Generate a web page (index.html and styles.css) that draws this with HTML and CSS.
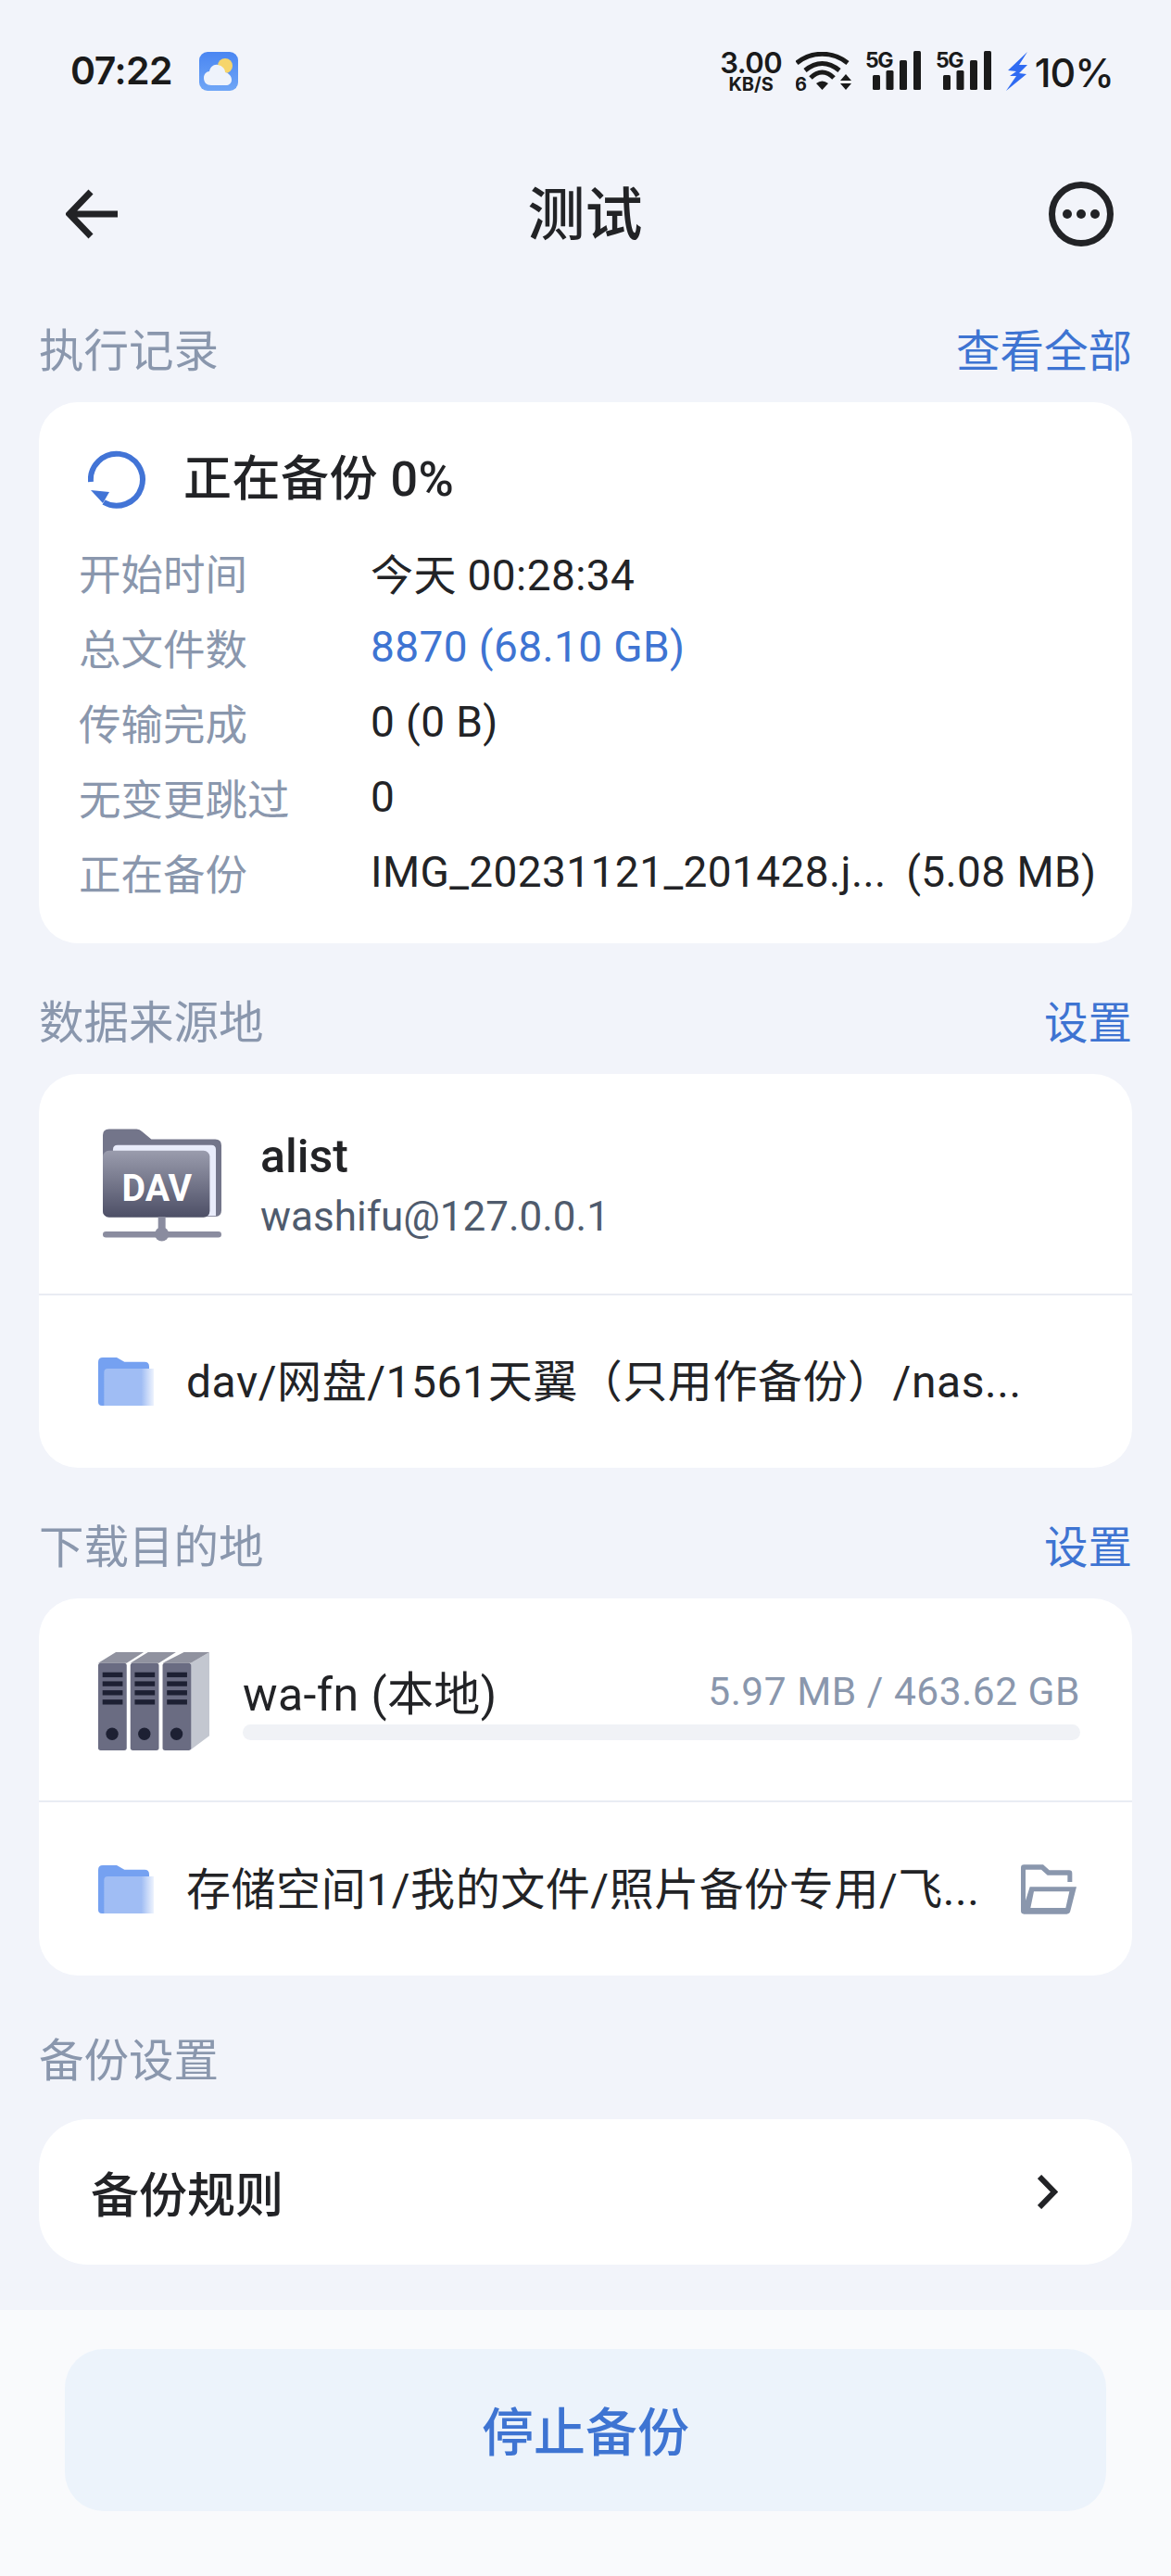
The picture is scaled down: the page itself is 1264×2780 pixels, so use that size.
FILE: index.html
```html
<!DOCTYPE html>
<html lang="zh-CN">
<head>
<meta charset="utf-8">
<title>测试</title>
<link rel="stylesheet" href="styles.css">
</head>
<body>
<div class="page">
  <div class="statusbar">
    <span class="time">07:22</span>
    <svg class="weather" viewBox="0 0 42 42"><defs><linearGradient id="wg" x1="0" y1="0" x2="0" y2="1"><stop offset="0" stop-color="#4a86f2"/><stop offset="1" stop-color="#6fa6f6"/></linearGradient></defs><rect width="42" height="42" rx="9" fill="url(#wg)"/><circle cx="28" cy="15" r="8" fill="#f6d56b"/><path d="M13 36c-5 0-8-3-8-8 0-4 3-7 6-7 1-5 5-8 9-7 5 1 8 4 8 8 4 1 7 4 7 8 0 4-3 6-6 6z" fill="#eef3fb"/></svg>
    <div class="status-right">
      <div class="speed"><span class="speed-num">3.00</span><span class="speed-unit">KB/S</span></div>
      <svg class="wifi" viewBox="0 0 60 48"><g fill="none" stroke="#1a1a1a" stroke-width="5"><path d="M1 12C17-1 40-1 56 12"/><path d="M10 20C22 10 35 10 47 20"/><path d="M16 28C24 20 33 20 41 28"/></g><path d="M22 34Q28.500 29 35 34L28.500 41z" fill="#1a1a1a"/><path d="M54 24l6 7H48zM48 34h12l-6 7z" fill="#1a1a1a"/><text x="-1" y="42" class="wifi-six">6</text></svg>
      <svg class="signal" viewBox="0 0 60 43"><text x="-1" y="19" class="sig-text">5G</text><rect x="7" y="27" width="8" height="16" rx="1.500"/><rect x="21.500" y="22" width="8" height="21" rx="1.500"/><rect x="36" y="11" width="8" height="32" rx="1.500"/><rect x="51" y="1" width="8" height="42" rx="1.500"/></svg>
      <svg class="signal signal-second" viewBox="0 0 60 43"><text x="-1" y="19" class="sig-text">5G</text><rect x="7" y="27" width="8" height="16" rx="1.500"/><rect x="21.500" y="22" width="8" height="21" rx="1.500"/><rect x="36" y="11" width="8" height="32" rx="1.500"/><rect x="51" y="1" width="8" height="42" rx="1.500"/></svg>
      <svg class="bolt" viewBox="0 0 24 42"><path d="M23 0 2 20l9 1-7 5h7L0 42 22 24l-8-1 9-9h-9z" fill="#2f6bf2"/></svg>
      <span class="battery">10%</span>
    </div>
  </div>

  <div class="navbar">
    <svg class="back" viewBox="0 0 56 54"><path d="M27 3 4 27l23 24M4 27h52" fill="none" stroke="#222326" stroke-width="7"/></svg>
    <span class="nav-title">测试</span>
    <svg class="more" viewBox="0 0 70 70"><circle cx="35" cy="35" r="31.500" fill="none" stroke="#222326" stroke-width="7"/><circle cx="20" cy="35" r="5" fill="#222326"/><circle cx="35" cy="35" r="5" fill="#222326"/><circle cx="50" cy="35" r="5" fill="#222326"/></svg>
  </div>

  <main class="content">
    <div class="section-head section-head-first"><span class="section-title">执行记录</span><span class="section-link">查看全部</span></div>
    <section class="card card-record">
      <div class="record-head">
        <svg class="spinner" viewBox="0 0 64 64"><path d="M3 34A28 28 0 1 1 17 56" fill="none" stroke="#4274d6" stroke-width="6"/><path d="M3 43l20 2-7 12z" fill="#4274d6"/></svg>
        <span class="record-title">正在备份 0%</span>
      </div>
      <div class="record-rows">
        <div class="record-row"><span class="record-label">开始时间</span><span class="record-value">今天 00:28:34</span></div>
        <div class="record-row"><span class="record-label">总文件数</span><span class="record-value record-value-link">8870 (68.10 GB)</span></div>
        <div class="record-row"><span class="record-label">传输完成</span><span class="record-value">0 (0 B)</span></div>
        <div class="record-row"><span class="record-label">无变更跳过</span><span class="record-value">0</span></div>
        <div class="record-row"><span class="record-label">正在备份</span><span class="record-value">IMG_20231121_201428.j...&nbsp;&thinsp;(5.08 MB)</span></div>
      </div>
    </section>

    <div class="section-head"><span class="section-title">数据来源地</span><span class="section-link">设置</span></div>
    <section class="card">
      <div class="source-row">
        <svg class="dav-icon" viewBox="212 145 386 365">
          <defs>
            <linearGradient id="dv" x1="0" y1="0" x2="0" y2="1"><stop offset="0" stop-color="#9a9cad"/><stop offset="1" stop-color="#4d4f66"/></linearGradient>
          </defs>
          <path d="M212 165q0-20 20-20h90q10 0 18 8l30 25h208q20 0 20 20v212q0 20-20 20H232q-20 0-20-20z" fill="#73758a"/>
          <path d="M245 212q0-15 15-15h305q15 0 15 15v216H245z" fill="#e9ecfb"/>
          <rect x="212" y="215" width="348" height="217" rx="20" fill="url(#dv)"/>
          <text x="274" y="380" class="dav-text" textLength="228" lengthAdjust="spacingAndGlyphs">DAV</text>
          <rect x="392" y="430" width="24" height="50" fill="#8a8c9f"/>
          <rect x="212" y="478" width="386" height="20" rx="10" fill="#8a8c9f"/>
          <circle cx="404" cy="487" r="23" fill="#8a8c9f"/>
        </svg>
        <div class="source-text">
          <div class="source-name">alist</div>
          <div class="source-addr">washifu@127.0.0.1</div>
        </div>
      </div>
      <div class="path-row path-row-source">
        <svg class="folder" viewBox="198 882 180 156">
          <defs><linearGradient id="fg" x1="0" y1="0" x2="1" y2="0"><stop offset="0.75" stop-color="#a0bdf4"/><stop offset="1" stop-color="#eef3fd"/></linearGradient></defs>
          <path d="M198 897q0-15 15-15h45l25 14h65q15 0 15 15v112q0 15-15 15H210q-12 0-12-12z" fill="#75a1f1"/>
          <path d="M217 930q0-12 12-12h149v120H217z" fill="url(#fg)"/>
        </svg>
        <span class="path-text">dav/网盘/1561天翼（只用作备份）/nas...</span>
      </div>
    </section>

    <div class="section-head"><span class="section-title">下载目的地</span><span class="section-link">设置</span></div>
    <section class="card">
      <div class="dest-row">
        <svg class="server-icon" viewBox="135 65 362 320">
          <path d="M437 103 497 68v270l-60 45z" fill="#c3c7d0"/>
          <path d="M138 103 195 68h90l-55 35zM242 103 299 68h90l-55 35zM346 103 415 68h82l-60 35z" fill="#90929f"/>
          <rect x="138" y="103" width="92" height="282" rx="8" fill="#6a6c82"/>
          <rect x="242" y="103" width="92" height="282" rx="8" fill="#6a6c82"/>
          <rect x="346" y="103" width="92" height="282" rx="8" fill="#6a6c82"/>
          <g fill="#1d2033">
            <rect x="152" y="133" width="65" height="16"/><rect x="152" y="162" width="65" height="16"/><rect x="152" y="191" width="65" height="16"/><rect x="152" y="221" width="65" height="16"/><circle cx="183" cy="332" r="20"/>
            <rect x="256" y="133" width="65" height="16"/><rect x="256" y="162" width="65" height="16"/><rect x="256" y="191" width="65" height="16"/><rect x="256" y="221" width="65" height="16"/><circle cx="287" cy="332" r="20"/>
            <rect x="360" y="133" width="65" height="16"/><rect x="360" y="162" width="65" height="16"/><rect x="360" y="191" width="65" height="16"/><rect x="360" y="221" width="65" height="16"/><circle cx="391" cy="332" r="20"/>
          </g>
        </svg>
        <div class="dest-info">
          <div class="dest-line"><span class="dest-name">wa-fn (本地)</span><span class="dest-size">5.97 MB / 463.62 GB</span></div>
          <div class="dest-bar"></div>
        </div>
      </div>
      <div class="path-row path-row-dest">
        <svg class="folder" viewBox="198 882 180 156">
          <path d="M198 897q0-15 15-15h45l25 14h65q15 0 15 15v112q0 15-15 15H210q-12 0-12-12z" fill="#75a1f1"/>
          <path d="M217 930q0-12 12-12h149v120H217z" fill="url(#fg)"/>
        </svg>
        <span class="path-text">存储空间1/我的文件/照片备份专用/飞...</span>
        <svg class="open-folder" viewBox="305 158 180 160"><path fill-rule="evenodd" d="M305 168q0-10 10-10h62l20 18h64q10 0 10 10v28h-15v-22h-65l-20-18h-51v100l14-44h151l-20 78q-2 10-12 10H315q-10 0-10-10zM347 245l-11 53h114l12-53z" fill="#8a97ad"/></svg>
      </div>
    </section>

    <div class="section-head section-head-plain"><span class="section-title">备份设置</span></div>
    <section class="card card-rule">
      <span class="rule-title">备份规则</span>
      <svg class="chevron" viewBox="0 0 22 37"><path d="M2 2l16 16.500L2 35" fill="none" stroke="#222326" stroke-width="6"/></svg>
    </section>
  </main>

  <footer class="bottom">
    <div class="stop-button">停止备份</div>
  </footer>
</div>
</body>
</html>
```
FILE: styles.css
```css
* { box-sizing: border-box; }
html, body { margin: 0; padding: 0; }
body {
  background: #f2f4fa;
  color: #222326;
  font-family: Roboto, "Noto Sans CJK SC", sans-serif;
}
.page { width: 1264px; height: 2780px; display: flex; flex-direction: column; }

.statusbar {
  height: 150px;
  padding: 0 62px 0 76px;
  display: flex;
  align-items: flex-start;
  font-family: Inter, sans-serif;
  color: #1a1a1a;
}
.time { margin-top: 51px; font-size: 41px; line-height: 50px; font-weight: 600; letter-spacing: -0.5px; }
.weather { width: 42px; height: 42px; margin: 56px 0 0 29px; }
.status-right { margin-left: auto; display: flex; align-items: flex-start; padding-top: 54px; }
.speed { width: 70px; display: flex; flex-direction: column; align-items: center; }
.speed-num { font-size: 31px; line-height: 28px; font-weight: 600; letter-spacing: -0.5px; }
.speed-unit { font-size: 20px; line-height: 18px; font-weight: 700; }
.wifi { width: 60px; height: 48px; margin: 2px 0 0 13px; }
.wifi-six { font: 700 20px Inter, sans-serif; fill: #1a1a1a; }
.signal { width: 60px; height: 43px; margin-left: 16px; fill: #1a1a1a; overflow: visible; }
.signal-second { margin-left: 16px; }
.sig-text { font: 700 23px Inter, sans-serif; letter-spacing: -1.5px; }
.bolt { width: 24px; height: 42px; margin: 2px 0 0 15px; }
.battery { margin: 0 0 0 7px; font-size: 43px; line-height: 48px; font-weight: 500; letter-spacing: -1px; }

.navbar {
  height: 162px;
  padding: 0 62px 0 71px;
  display: flex;
  align-items: center;
  justify-content: space-between;
}
.back { width: 56px; height: 54px; }
.more { width: 70px; height: 70px; }
.nav-title { font-size: 62px; line-height: 80px; font-weight: 500; padding: 3px 0 0 4px; }

.content { flex: 1; padding: 0 42px; }
.section-head {
  height: 110px;
  margin-top: 31px;
  padding-top: 2px;
  display: flex;
  align-items: center;
  justify-content: space-between;
}
.section-head-first { height: 122px; margin-top: 0; padding-top: 14px; }
.section-head-plain { height: 125px; margin-top: 30px; padding-top: 0; }
.section-title { font-size: 48.500px; line-height: 60px; color: #8a97ad; }
.section-link { font-size: 47.500px; line-height: 60px; color: #3e74d2; }

.card { background: #fff; border-radius: 42px; overflow: hidden; }

.card-record { padding: 44px 0 37px; }
.record-head { height: 80px; padding-left: 53px; display: flex; align-items: center; gap: 39px; }
.spinner { width: 64px; height: 64px; }
.record-title { font-size: 52px; line-height: 70px; font-weight: 500; letter-spacing: 0.5px; }
.record-rows { margin-top: 18px; }
.record-row { height: 81px; padding-left: 43px; display: flex; align-items: center; font-size: 46px; white-space: nowrap; }
.record-label { width: 315px; color: #8a97ad; font-size: 45.500px; }
.record-value { letter-spacing: 0.4px; }
.record-value-link { color: #3e74d2; }

.source-row { height: 239px; display: flex; align-items: flex-start; padding: 59px 0 0 69px; border-bottom: 2px solid #e9ecf3; }
.dav-icon { width: 128px; height: 122px; }
.source-text { margin: -6px 0 0 42px; }
.source-name { font-size: 50px; line-height: 64px; font-weight: 500; margin-top: 4px; }
.source-addr { font-size: 44px; line-height: 66px; color: #4f5b6d; }

.path-row { display: flex; align-items: center; padding-left: 64px; }
.path-row-source { height: 186px; }
.path-row-dest { height: 187px; }
.folder { width: 60px; height: 52px; }
.path-text { margin: 2px 0 0 35px; font-size: 48px; line-height: 60px; letter-spacing: 0.55px; white-space: nowrap; }
.open-folder { width: 60px; height: 54px; margin-left: auto; margin-right: 60px; }

.dest-row { height: 220px; display: flex; align-items: flex-start; padding: 57px 56px 0 63px; border-bottom: 2px solid #e9ecf3; }
.server-icon { width: 121px; height: 107px; }
.dest-info { flex: 1; margin-left: 36px; }
.dest-line { display: flex; align-items: center; justify-content: space-between; height: 72px; margin-top: 7px; }
.dest-name { font-size: 50px; letter-spacing: 0.4px; padding-bottom: 3px; }
.dest-size { font-size: 42.500px; letter-spacing: 0.5px; color: #8a97ad; }
.dest-bar { height: 17px; border-radius: 9px; background: #f0f2f6; }

.card-rule { height: 157px; border-radius: 53px; padding: 0 80px 0 56px; display: flex; align-items: center; justify-content: space-between; }
.rule-title { font-size: 52px; font-weight: 500; }
.chevron { width: 22px; height: 37px; }

.dav-text { font: 700 124px Roboto, sans-serif; fill: #fff; }

.bottom { height: 287px; padding: 42px 70px 0; background: #f9fafc; }
.stop-button {
  height: 175px;
  border-radius: 42px;
  background: #ecf3fb;
  color: #3e74d2;
  font-size: 56px;
  font-weight: 500;
  padding-bottom: 5px;
  display: flex;
  align-items: center;
  justify-content: center;
}
```
